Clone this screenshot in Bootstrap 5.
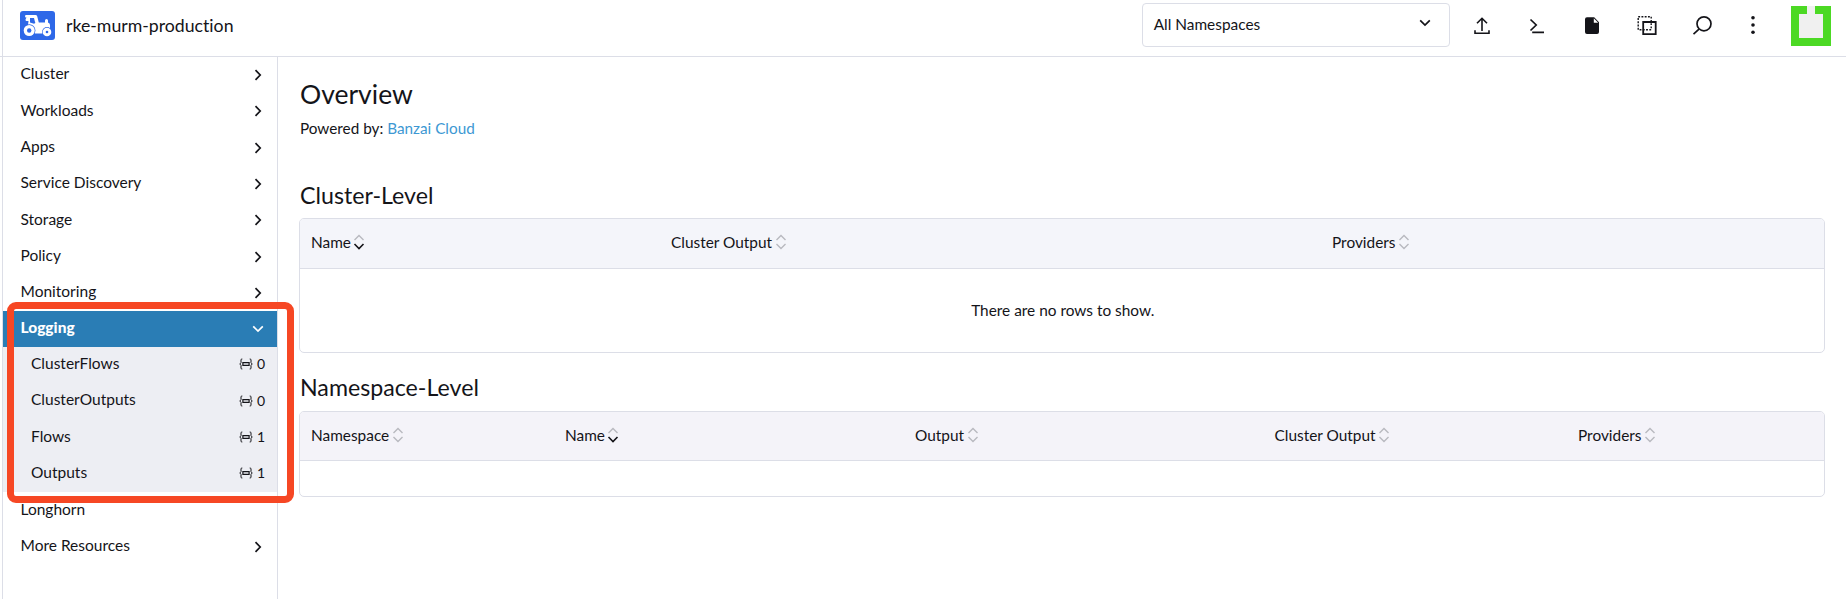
<!DOCTYPE html>
<html lang="en">
<head>
<meta charset="utf-8">
<meta name="viewport" content="width=device-width, initial-scale=1">
<title>rke-murm-production</title>
<link href="https://cdn.jsdelivr.net/npm/bootstrap@5.3.0/dist/css/bootstrap.min.css" rel="stylesheet">
<style>
  :root { --line: #dcdee7; --ink: #141419; }
  body { font-family: Lato, "Liberation Sans", sans-serif; font-size: 15.4px; line-height: 20px; font-variant-ligatures: none; color: var(--ink); height: 599px; overflow: hidden; background: #fff; }
  svg { display: block; flex: none; fill: none; stroke: currentColor; }
  svg.solid { stroke: none; fill: currentColor; }
  .shell { height: 599px; padding-left: 2px; }
  .frame { border-left: 1px solid var(--line); }
  .topbar { height: 57px; border-bottom: 1px solid var(--line); margin-left: -3px; padding: 0 15px 5px 20px; }
  .cluster-name { font-size: 17.7px; margin-left: 11px; }
  .ns-select { width: 308px; height: 44px; border: 1px solid var(--line); border-radius: 4px; padding: 0 18px 2px 11px; margin: -1px 21.3px 0 0; }
  .ns-select svg { margin-bottom: 2px; }
  .tools { gap: 33px; margin: 0 27.5px 2px 0; }
  .tools .more { margin-left: -4.5px; }
  .sidebar { width: 275px; border-right: 1px solid var(--line); }
  .side-item { height: 36.3px; padding: 0 15px 3.5px 17.5px; font-size: 15.5px; }
  .side-item svg { margin-top: 3.5px; }
  .side-item.current { background: #2a7db5; color: #fff; font-weight: 900; padding-right: 13px; height: 36px; }
  .side-sub { background: #edeef3; }
  .side-sub .side-item { padding: 0 12px 4.5px 28px; }
  .tally { font-size: 14px; gap: 4px; padding-top: 2.5px; }
  .side-item .tally svg { margin-top: 0; }
  .annotated { position: relative; }
  .marker { position: absolute; left: 4px; top: -9px; width: 287px; height: 201px; border: 7px solid #f64724; border-radius: 9px; z-index: 2; }
  .content { padding: 22px 21px 0 20.5px; }
  h1 { font-size: 26.5px; line-height: 30px; font-weight: 400; margin: 0; }
  h2 { font-size: 23.2px; line-height: 28px; font-weight: 400; margin: 0 0 9px; }
  h1, h2, .powered { padding-left: 1.5px; }
  .powered { margin: 8.5px 0 43.5px; font-size: 15.3px; }
  .powered a { color: #3d98d3; text-decoration: none; }
  .grid-box { border: 1px solid var(--line); border-radius: 5px; overflow: hidden; }
  .grid-box + h2 { margin: 19.5px 0 10px; }
  .grid-head { display: grid; background: #f4f5fa; border-bottom: 1px solid var(--line); padding: 0 0 3.500px 11.500px; align-items: center; height: 50px; }
  .cols-3 { grid-template-columns: 360px 661px 1fr; }
  .cols-5 { grid-template-columns: 254px 350px 359.5px 303.5px 1fr; height: 49px; padding-bottom: 2px; background: #f4f3f9; }
  .grid-head > div { display: flex; align-items: center; }
  .sorter { stroke: #b8b9bf; margin-left: 2.5px; }
  .empty-note { height: 83px; padding: 0 0 2px 2px; }
  .blank-row { height: 35px; }
</style>
</head>
<body>
<svg class="d-none">
  <symbol id="right" viewBox="0 0 8 12"><path d="M1.500 1.200 6.200 6 1.500 10.800" stroke-width="1.700"/></symbol>
  <symbol id="down" viewBox="0 0 12 8"><path d="M1.200 1.300 6 6 10.800 1.300" stroke-width="1.700"/></symbol>
  <symbol id="ns" viewBox="0 0 14 12"><path d="M3.300 1H2.800Q2 1 2 2v2.600L.8 6 2 7.400V10q0 1 .8 1h.5M10.700 1h.5q.8 0 .8 1v2.600L13.200 6 12 7.400V10q0 1-.8 1h-.5" stroke-width="1"/><path d="M3.900 4.700h6.200v2.600H3.900z" stroke-width="1.200"/></symbol>
  <symbol id="sort" viewBox="0 0 12 16"><path d="M1.500 6 6 1.500 10.500 6M1.500 10 6 14.500 10.500 10" stroke-width="1.4"/></symbol>
  <symbol id="sorted" viewBox="0 0 12 16"><path d="M1.500 6 6 1.500 10.500 6" stroke-width="1.4"/><path d="M1.500 10 6 14.500 10.500 10" stroke="#141419" stroke-width="1.600"/></symbol>
</svg>
<div class="shell">
 <div class="frame h-100 d-flex flex-column">
  <header class="topbar d-flex align-items-center">
    <svg class="solid" width="35" height="29" viewBox="0 0 35 29">
      <rect width="35" height="29" rx="3" fill="#2e68e8"/>
      <path d="M5.500 4H15.500Q16.800 4 17.200 5.200L18.800 11.500H25V9.500Q25 8 26.500 8T28 9.500V11.500Q30 12 30 14V18L24 22.500H15L8 14L8.500 10H6.500Q5.500 10 5.500 8.500L6.500 6.500H5.500Q4.500 5.300 5.500 4z" fill="#fff"/>
      <path d="M10 7H14L15.300 12 14 12.800 10 11.500z" fill="#2e68e8"/>
      <circle cx="9.200" cy="19.500" r="6.200" fill="#2e68e8"/>
      <circle cx="9.200" cy="19.500" r="5.500" fill="#fff"/>
      <circle cx="9.200" cy="19.500" r="2.200" fill="#2e68e8"/>
      <circle cx="27" cy="21" r="4.900" fill="#2e68e8"/>
      <circle cx="27" cy="21" r="4.300" fill="#fff"/>
      <circle cx="27" cy="21" r="1.300" fill="#2e68e8"/>
    </svg>
    <span class="cluster-name">rke-murm-production</span>
    <div class="ns-select d-flex align-items-center justify-content-between ms-auto"><span>All Namespaces</span><svg width="12" height="8"><use href="#down"/></svg></div>
    <div class="tools d-flex align-items-center" aria-label="Actions">
      <svg width="22" height="22" viewBox="0 0 22 22" stroke-width="1.6"><path d="M11 17V4.500M6 9.300l5-5 5 5M4 16.200v3h14v-3"/></svg>
      <svg width="22" height="22" viewBox="0 0 22 22" stroke-width="1.7"><path d="M4.500 5.500 10.200 11 4.500 16.500M6.200 18.400H18"/></svg>
      <svg class="solid" width="22" height="22" viewBox="0 0 22 22"><path d="M6 3.200h7.200L18 8.300V18q0 2-2 2H6q-2 0-2-2V5.200q0-2 2-2z"/><path d="M12.800 4.300v4.400h4.400z" fill="#fff"/></svg>
      <svg width="22" height="22" viewBox="0 0 22 22" stroke-width="1.4"><path d="M2.200 2.700h13v13h-13z" stroke-dasharray="1.900 1.350"/><path d="M7.200 8h12.500v12.200H7.200z" stroke-width="1.800"/></svg>
      <svg width="22" height="22" viewBox="0 0 22 22" stroke-width="1.7"><circle cx="13" cy="9.800" r="7"/><path d="M8 15.200l-5.500 5"/></svg>
      <svg class="solid more" width="22" height="22" viewBox="0 0 22 22"><circle cx="11" cy="3.800" r="1.800"/><circle cx="11" cy="11" r="1.800"/><circle cx="11" cy="18.300" r="1.800"/></svg>
    </div>
    <svg class="solid" width="40" height="40" viewBox="0 0 5 5" shape-rendering="crispEdges"><path d="M0 0h5v5H0z" fill="#4cd924"/><path d="M2 0h1v1h1v3H1V1h1z" fill="#f0f0f0"/></svg>
  </header>
  <div class="d-flex flex-grow-1">
    <nav class="sidebar flex-shrink-0">
      <div class="side-item d-flex align-items-center justify-content-between">Cluster<svg width="8" height="12"><use href="#right"/></svg></div>
      <div class="side-item d-flex align-items-center justify-content-between">Workloads<svg width="8" height="12"><use href="#right"/></svg></div>
      <div class="side-item d-flex align-items-center justify-content-between">Apps<svg width="8" height="12"><use href="#right"/></svg></div>
      <div class="side-item d-flex align-items-center justify-content-between">Service Discovery<svg width="8" height="12"><use href="#right"/></svg></div>
      <div class="side-item d-flex align-items-center justify-content-between">Storage<svg width="8" height="12"><use href="#right"/></svg></div>
      <div class="side-item d-flex align-items-center justify-content-between">Policy<svg width="8" height="12"><use href="#right"/></svg></div>
      <div class="side-item d-flex align-items-center justify-content-between">Monitoring<svg width="8" height="12"><use href="#right"/></svg></div>
      <div class="annotated">
        <div class="side-item current d-flex align-items-center justify-content-between">Logging<svg width="12" height="8"><use href="#down"/></svg></div>
        <div class="side-sub">
          <div class="side-item d-flex align-items-center justify-content-between">ClusterFlows<span class="tally d-flex align-items-center"><svg width="14" height="12"><use href="#ns"/></svg>0</span></div>
          <div class="side-item d-flex align-items-center justify-content-between">ClusterOutputs<span class="tally d-flex align-items-center"><svg width="14" height="12"><use href="#ns"/></svg>0</span></div>
          <div class="side-item d-flex align-items-center justify-content-between">Flows<span class="tally d-flex align-items-center"><svg width="14" height="12"><use href="#ns"/></svg>1</span></div>
          <div class="side-item d-flex align-items-center justify-content-between">Outputs<span class="tally d-flex align-items-center"><svg width="14" height="12"><use href="#ns"/></svg>1</span></div>
        </div>
        <div class="marker"></div>
      </div>
      <div class="side-item d-flex align-items-center justify-content-between">Longhorn</div>
      <div class="side-item d-flex align-items-center justify-content-between">More Resources<svg width="8" height="12"><use href="#right"/></svg></div>
    </nav>
    <main class="content flex-grow-1">
      <h1>Overview</h1>
      <div class="powered">Powered by: <a href="#">Banzai Cloud</a></div>
      <h2>Cluster-Level</h2>
      <section class="grid-box">
        <div class="grid-head cols-3">
          <div>Name<svg class="sorter" width="12" height="16"><use href="#sorted"/></svg></div>
          <div>Cluster Output<svg class="sorter" width="12" height="16"><use href="#sort"/></svg></div>
          <div>Providers<svg class="sorter" width="12" height="16"><use href="#sort"/></svg></div>
        </div>
        <div class="empty-note d-flex align-items-center justify-content-center">There are no rows to show.</div>
      </section>
      <h2>Namespace-Level</h2>
      <section class="grid-box">
        <div class="grid-head cols-5">
          <div>Namespace<svg class="sorter" width="12" height="16"><use href="#sort"/></svg></div>
          <div>Name<svg class="sorter" width="12" height="16"><use href="#sorted"/></svg></div>
          <div>Output<svg class="sorter" width="12" height="16"><use href="#sort"/></svg></div>
          <div>Cluster Output<svg class="sorter" width="12" height="16"><use href="#sort"/></svg></div>
          <div>Providers<svg class="sorter" width="12" height="16"><use href="#sort"/></svg></div>
        </div>
        <div class="blank-row"></div>
      </section>
    </main>
  </div>
 </div>
</div>
<script src="https://cdn.jsdelivr.net/npm/bootstrap@5.3.0/dist/js/bootstrap.bundle.min.js"></script>
</body>
</html>
